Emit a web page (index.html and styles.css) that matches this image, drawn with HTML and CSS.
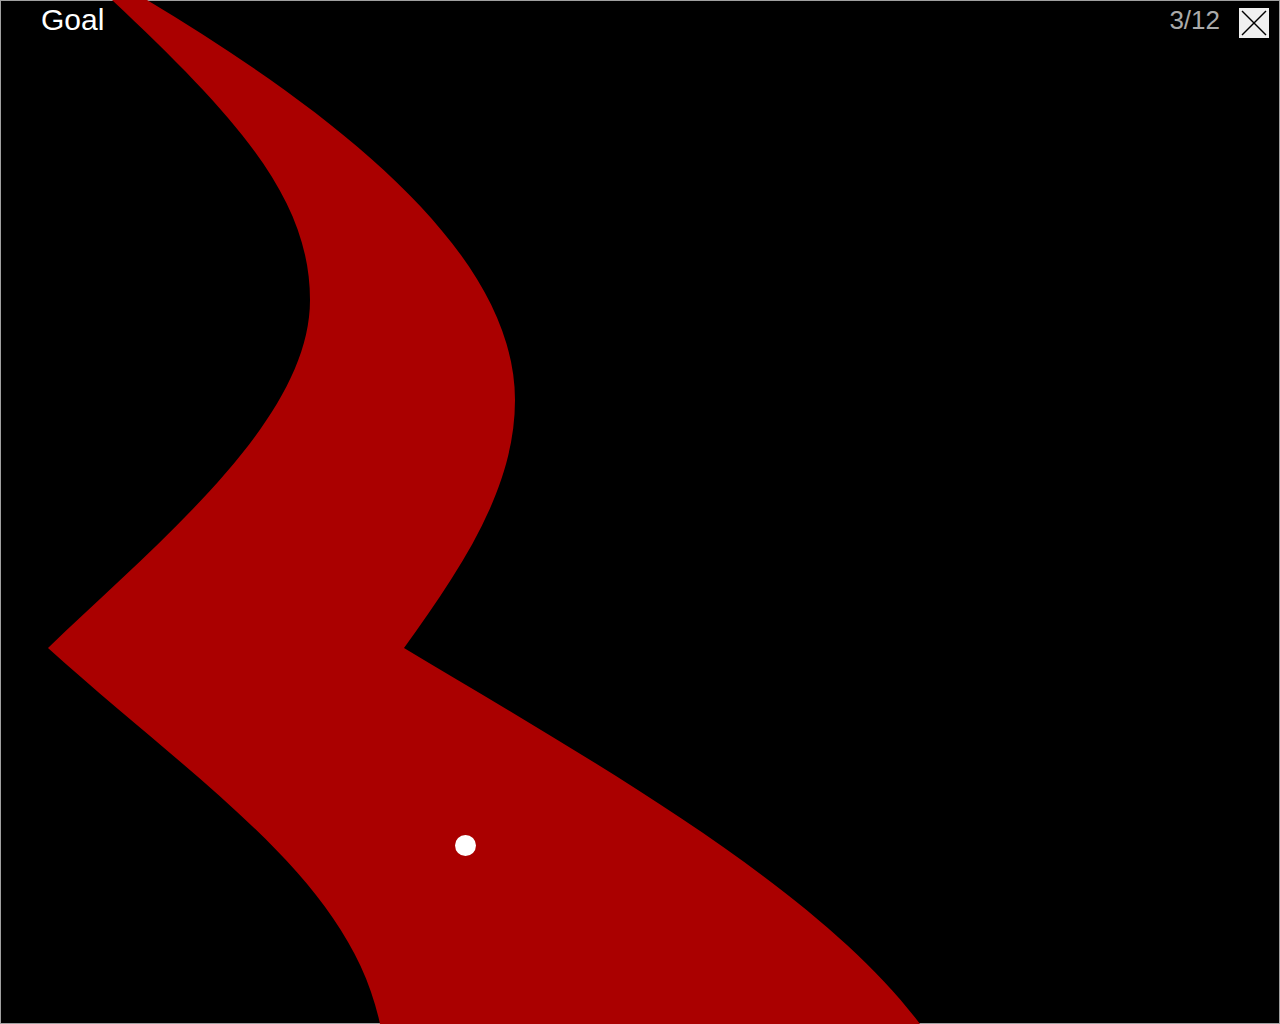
FILE: index.html
```html
<!DOCTYPE html>
<html>
<head>
<meta charset="utf-8">
<link rel="stylesheet" href="styles.css">
</head>
<body>
<div class="stage">
  <svg class="canvas" width="1280" height="1024" viewBox="0 0 1280 1024">
    <rect x="0.5" y="0.5" width="1279" height="1023" fill="#000" stroke="#a0a0a0" stroke-width="1"/>
    <path fill="#aa0000" d="M112,0 C240,120 310,200 310,300 C310,420 160,540 48,648 C200,785 350,880 380,1024 L920,1024 C820,890 600,765 404,648 C460,570 515,490 515,400 C515,250 330,110 147,0 Z"/>
    <circle cx="465.5" cy="845.5" r="10.5" fill="#fff"/>
  </svg>
  <div class="hud">
    <div class="goal">Goal</div>
    <div class="spacer"></div>
    <div class="count">3/12</div>
    <div class="close">
      <svg width="30" height="30" viewBox="0 0 30 30">
        <line x1="3" y1="3" x2="27" y2="27" stroke="#000" stroke-width="1.4"/>
        <line x1="27" y1="3" x2="3" y2="27" stroke="#000" stroke-width="1.4"/>
      </svg>
    </div>
  </div>
</div>
</body>
</html>
```
FILE: styles.css
```css
html, body {
  margin: 0;
  padding: 0;
  background: #000;
}
body {
  font-family: "Liberation Sans", Arial, sans-serif;
  overflow: hidden;
}
.stage {
  position: relative;
  width: 1280px;
  height: 1024px;
}
.canvas {
  display: block;
}
.hud {
  position: absolute;
  top: 0;
  left: 0;
  right: 0;
  display: flex;
  align-items: flex-start;
}
.goal {
  color: #fff;
  font-size: 30px;
  line-height: 30px;
  margin-left: 41px;
  margin-top: 5px;
}
.spacer {
  flex: 1;
}
.count {
  color: #aaaaaa;
  font-size: 26px;
  line-height: 26px;
  margin-top: 7px;
}
.close {
  width: 30px;
  height: 30px;
  margin: 8px 11px 0 19px;
  background: #f0f0f0;
}
.close svg {
  display: block;
}
```
